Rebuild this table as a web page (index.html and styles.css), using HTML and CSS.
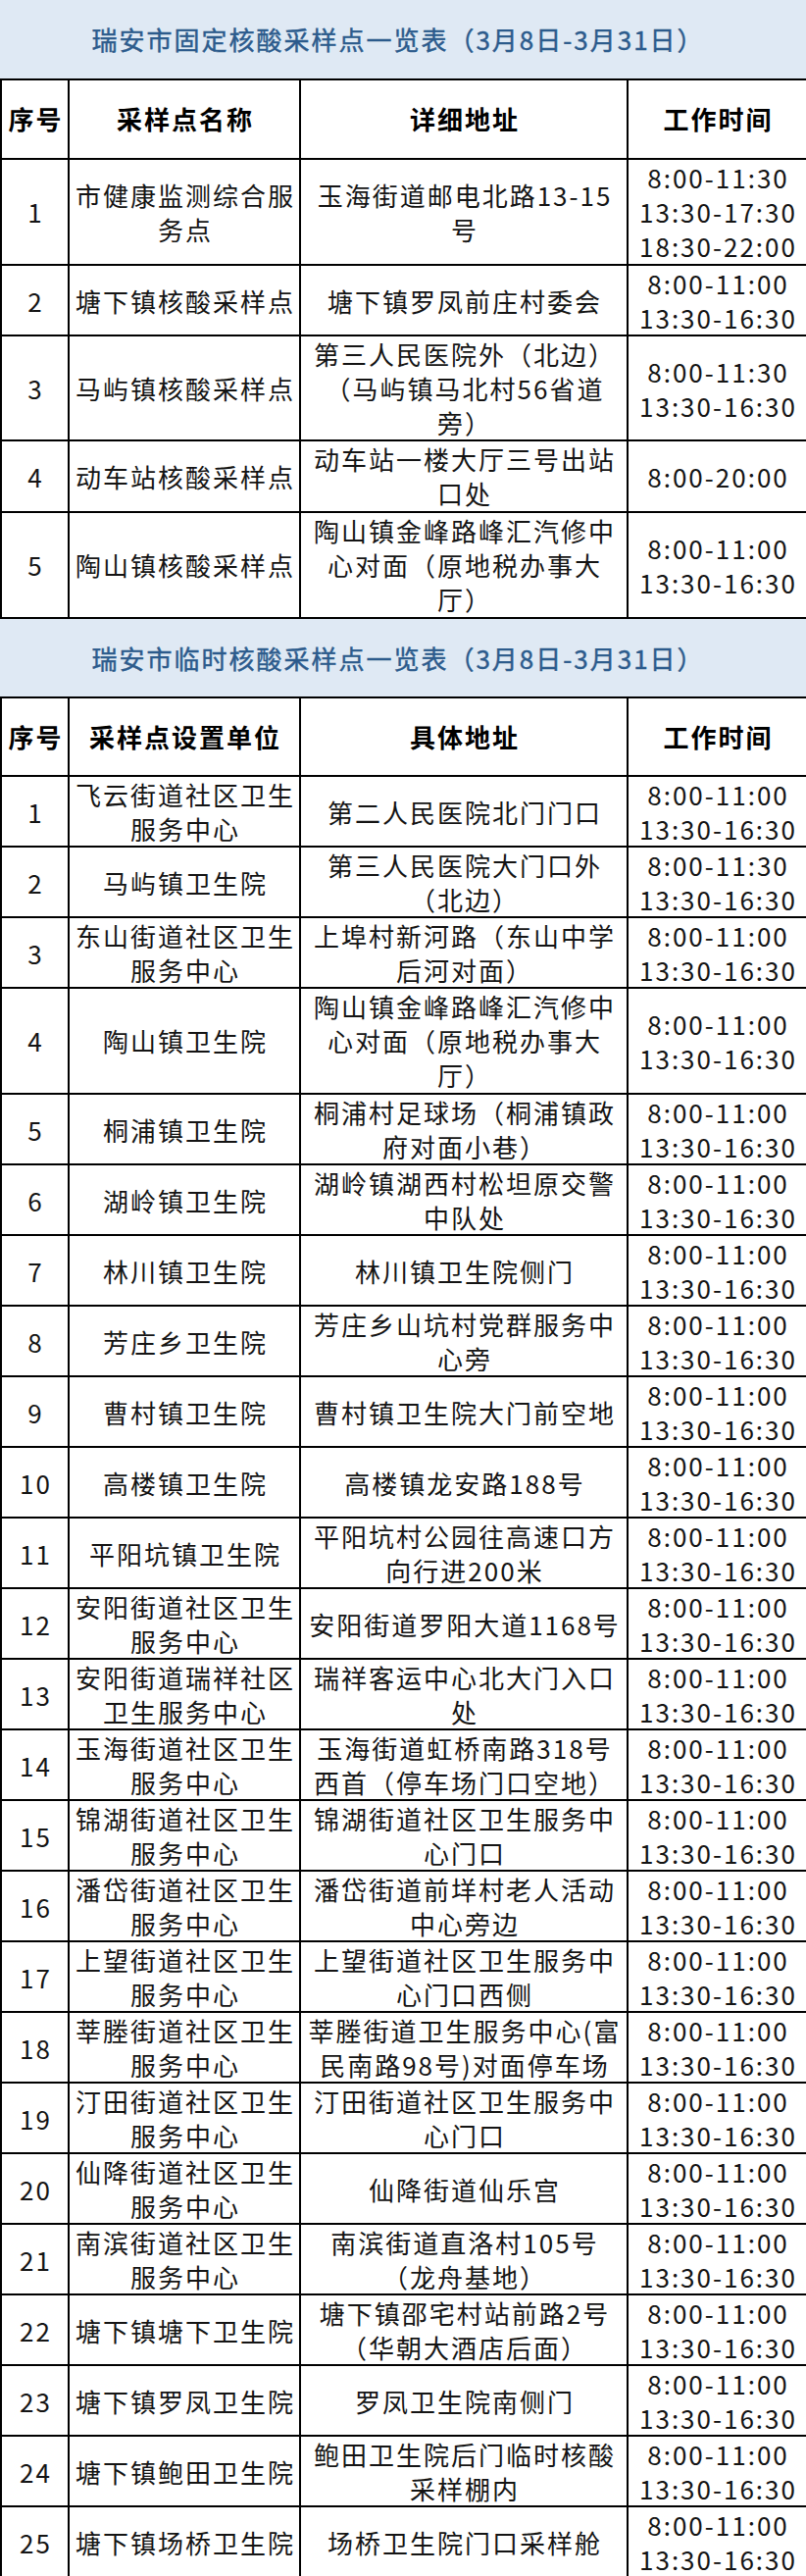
FILE: index.html
```html
<!DOCTYPE html>
<html lang="zh-CN">
<head>
<meta charset="utf-8">
<title>瑞安市核酸采样点一览表</title>
<link rel="stylesheet" href="styles.css">
</head>
<body>
<main class="sheet">
  <div class="band">瑞安市固定核酸采样点一览表（3月8日-3月31日）</div>
  <table class="grid">
    <colgroup><col class="c1"><col class="c2"><col class="c3"><col class="c4"></colgroup>
    <thead>
      <tr class="head first"><th>序号</th><th>采样点名称</th><th>详细地址</th><th>工作时间</th></tr>
    </thead>
    <tbody>
      <tr class="tall"><td>1</td><td>市健康监测综合服<br>务点</td><td>玉海街道邮电北路13-15<br>号</td><td>8:00-11:30<br>13:30-17:30<br>18:30-22:00</td></tr>
      <tr><td>2</td><td>塘下镇核酸采样点</td><td>塘下镇罗凤前庄村委会</td><td>8:00-11:00<br>13:30-16:30</td></tr>
      <tr><td>3</td><td>马屿镇核酸采样点</td><td>第三人民医院外（北边）<br>（马屿镇马北村56省道<br>旁）</td><td>8:00-11:30<br>13:30-16:30</td></tr>
      <tr class="extra"><td>4</td><td>动车站核酸采样点</td><td>动车站一楼大厅三号出站<br>口处</td><td>8:00-20:00</td></tr>
      <tr class="tall"><td>5</td><td>陶山镇核酸采样点</td><td>陶山镇金峰路峰汇汽修中<br>心对面（原地税办事大<br>厅）</td><td>8:00-11:00<br>13:30-16:30</td></tr>
    </tbody>
  </table>

  <div class="band second">瑞安市临时核酸采样点一览表（3月8日-3月31日）</div>
  <table class="grid">
    <colgroup><col class="c1"><col class="c2"><col class="c3"><col class="c4"></colgroup>
    <thead>
      <tr class="head"><th>序号</th><th>采样点设置单位</th><th>具体地址</th><th>工作时间</th></tr>
    </thead>
    <tbody>
      <tr><td>1</td><td>飞云街道社区卫生<br>服务中心</td><td>第二人民医院北门门口</td><td>8:00-11:00<br>13:30-16:30</td></tr>
      <tr><td>2</td><td>马屿镇卫生院</td><td>第三人民医院大门口外<br>（北边）</td><td>8:00-11:30<br>13:30-16:30</td></tr>
      <tr><td>3</td><td>东山街道社区卫生<br>服务中心</td><td>上埠村新河路（东山中学<br>后河对面）</td><td>8:00-11:00<br>13:30-16:30</td></tr>
      <tr class="tall"><td>4</td><td>陶山镇卫生院</td><td>陶山镇金峰路峰汇汽修中<br>心对面（原地税办事大<br>厅）</td><td>8:00-11:00<br>13:30-16:30</td></tr>
      <tr><td>5</td><td>桐浦镇卫生院</td><td>桐浦村足球场（桐浦镇政<br>府对面小巷）</td><td>8:00-11:00<br>13:30-16:30</td></tr>
      <tr><td>6</td><td>湖岭镇卫生院</td><td>湖岭镇湖西村松坦原交警<br>中队处</td><td>8:00-11:00<br>13:30-16:30</td></tr>
      <tr><td>7</td><td>林川镇卫生院</td><td>林川镇卫生院侧门</td><td>8:00-11:00<br>13:30-16:30</td></tr>
      <tr><td>8</td><td>芳庄乡卫生院</td><td>芳庄乡山坑村党群服务中<br>心旁</td><td>8:00-11:00<br>13:30-16:30</td></tr>
      <tr><td>9</td><td>曹村镇卫生院</td><td>曹村镇卫生院大门前空地</td><td>8:00-11:00<br>13:30-16:30</td></tr>
      <tr><td>10</td><td>高楼镇卫生院</td><td>高楼镇龙安路188号</td><td>8:00-11:00<br>13:30-16:30</td></tr>
      <tr><td>11</td><td>平阳坑镇卫生院</td><td>平阳坑村公园往高速口方<br>向行进200米</td><td>8:00-11:00<br>13:30-16:30</td></tr>
      <tr><td>12</td><td>安阳街道社区卫生<br>服务中心</td><td>安阳街道罗阳大道1168号</td><td>8:00-11:00<br>13:30-16:30</td></tr>
      <tr><td>13</td><td>安阳街道瑞祥社区<br>卫生服务中心</td><td>瑞祥客运中心北大门入口<br>处</td><td>8:00-11:00<br>13:30-16:30</td></tr>
      <tr><td>14</td><td>玉海街道社区卫生<br>服务中心</td><td>玉海街道虹桥南路318号<br>西首（停车场门口空地）</td><td>8:00-11:00<br>13:30-16:30</td></tr>
      <tr><td>15</td><td>锦湖街道社区卫生<br>服务中心</td><td>锦湖街道社区卫生服务中<br>心门口</td><td>8:00-11:00<br>13:30-16:30</td></tr>
      <tr><td>16</td><td>潘岱街道社区卫生<br>服务中心</td><td>潘岱街道前垟村老人活动<br>中心旁边</td><td>8:00-11:00<br>13:30-16:30</td></tr>
      <tr><td>17</td><td>上望街道社区卫生<br>服务中心</td><td>上望街道社区卫生服务中<br>心门口西侧</td><td>8:00-11:00<br>13:30-16:30</td></tr>
      <tr><td>18</td><td>莘塍街道社区卫生<br>服务中心</td><td>莘塍街道卫生服务中心(富<br>民南路98号)对面停车场</td><td>8:00-11:00<br>13:30-16:30</td></tr>
      <tr><td>19</td><td>汀田街道社区卫生<br>服务中心</td><td>汀田街道社区卫生服务中<br>心门口</td><td>8:00-11:00<br>13:30-16:30</td></tr>
      <tr><td>20</td><td>仙降街道社区卫生<br>服务中心</td><td>仙降街道仙乐宫</td><td>8:00-11:00<br>13:30-16:30</td></tr>
      <tr><td>21</td><td>南滨街道社区卫生<br>服务中心</td><td>南滨街道直洛村105号<br>（龙舟基地）</td><td>8:00-11:00<br>13:30-16:30</td></tr>
      <tr><td>22</td><td>塘下镇塘下卫生院</td><td>塘下镇邵宅村站前路2号<br>（华朝大酒店后面）</td><td>8:00-11:00<br>13:30-16:30</td></tr>
      <tr><td>23</td><td>塘下镇罗凤卫生院</td><td>罗凤卫生院南侧门</td><td>8:00-11:00<br>13:30-16:30</td></tr>
      <tr><td>24</td><td>塘下镇鲍田卫生院</td><td>鲍田卫生院后门临时核酸<br>采样棚内</td><td>8:00-11:00<br>13:30-16:30</td></tr>
      <tr><td>25</td><td>塘下镇场桥卫生院</td><td>场桥卫生院门口采样舱</td><td>8:00-11:00<br>13:30-16:30</td></tr>
    </tbody>
  </table>
</main>
</body>
</html>
```

FILE: styles.css
```css
html, body {
  margin: 0;
  padding: 0;
  background: #ffffff;
  overflow-x: hidden;
}

body {
  font-family: "Noto Sans CJK SC", "Noto Sans", sans-serif;
  color: #141414;
}

.sheet {
  width: 822px;
}

.band {
  height: 80px;
  line-height: 80px;
  background: #dfe9f4;
  color: #2c5b8c;
  font-size: 26px;
  font-weight: 400;
  -webkit-text-stroke: 0.45px #2c5b8c;
  letter-spacing: 2px;
  text-align: center;
  padding-right: 10px;
}

.band.second {
  height: 79px;
  line-height: 79px;
}

.grid {
  width: 822px;
  table-layout: fixed;
  border-collapse: collapse;
  border: 2px solid #000;
}

.c1 { width: 69px; }
.c2 { width: 236px; }
.c3 { width: 334px; }
.c4 { width: 183px; }

.grid th,
.grid td {
  border: 2px solid #000;
  padding: 0 0 0 2px;
  text-align: center;
  vertical-align: middle;
  font-size: 26px;
  letter-spacing: 2px;
  line-height: 35px;
  white-space: nowrap;
  overflow: hidden;
}

.grid th {
  padding-top: 21px;
  padding-bottom: 22px;
  font-weight: 700;
  color: #000;
}

.grid .head.first th {
  padding-bottom: 23px;
}

.grid td {
  font-weight: 400;
}

.grid .tall td {
  padding-bottom: 1px;
}

.grid .extra td {
  padding-bottom: 1px;
}
```
